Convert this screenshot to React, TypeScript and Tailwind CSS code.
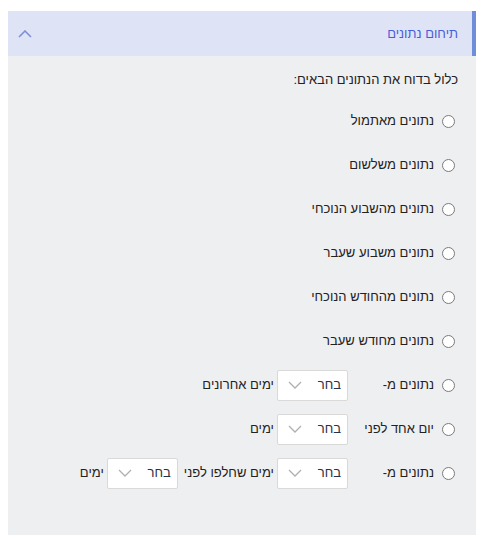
import React from "react";

function Chevron({ className }: { className?: string }) {
  return (
    <svg width="14" height="8" viewBox="0 0 14 8" className={className} fill="none">
      <path d="M1 1l6 6 6-6" stroke="currentColor" strokeWidth="1.3" />
    </svg>
  );
}

function Select() {
  return (
    <div className="w-[71px] h-[31px] bg-white border border-[#d9d9d9] rounded-[2px] flex items-center justify-between pr-[6px] pl-[10px] text-[#2a2f45]">
      <span>בחר</span>
      <Chevron className="text-[#b0b0b0]" />
    </div>
  );
}

function Radio() {
  return (
    <span className="w-[13px] h-[13px] rounded-full border border-[#7a7a7a] bg-white shrink-0 inline-block" />
  );
}

const simple = [
  "נתונים מאתמול",
  "נתונים משלשום",
  "נתונים מהשבוע הנוכחי",
  "נתונים משבוע שעבר",
  "נתונים מהחודש הנוכחי",
  "נתונים מחודש שעבר",
];

export default function App() {
  return (
    <div
      dir="rtl"
      className="bg-white pt-[11px] px-[8px] pb-[6px] text-[13px] text-[#222]"
      style={{ fontFamily: '"Liberation Sans", Arial, sans-serif' }}
    >
      <div className="w-[468px]">
        <div className="h-[45px] bg-[#dee4f6] border-r-4 border-[#6f8ddb] flex items-center justify-between pr-[14px] pl-[10px]">
          <span className="text-[#4b5dd6]">תיחום נתונים</span>
          <svg width="14" height="8" viewBox="0 0 14 8" fill="none" className="text-[#7d90d8]">
            <path d="M1 7l6-6 6 6" stroke="currentColor" strokeWidth="1.6" />
          </svg>
        </div>
        <div className="bg-[#eeeff1] h-[479px] pr-[18px] pt-[14px]">
          <div className="h-[20px] leading-[20px]">כלול בדוח את הנתונים הבאים:</div>
          <div className="pt-[9px]">
            {simple.map((t) => (
              <div key={t} className="h-[44px] flex items-center gap-[8px] pr-[3px]">
                <Radio />
                <span>{t}</span>
              </div>
            ))}
            <div className="h-[44px] flex items-center pr-[3px]">
              <Radio />
              <span className="w-[94px] pr-[8px] shrink-0">נתונים מ-</span>
              <Select />
              <span className="pr-[3px]">ימים אחרונים</span>
            </div>
            <div className="h-[44px] flex items-center pr-[3px]">
              <Radio />
              <span className="w-[94px] pr-[8px] shrink-0">יום אחד לפני</span>
              <Select />
              <span className="pr-[3px]">ימים</span>
            </div>
            <div className="h-[44px] flex items-center pr-[3px]">
              <Radio />
              <span className="w-[94px] pr-[8px] shrink-0">נתונים מ-</span>
              <Select />
              <span className="pr-[3px] pl-[6px]">ימים שחלפו לפני</span>
              <Select />
              <span className="pr-[3px]">ימים</span>
            </div>
          </div>
        </div>
      </div>
    </div>
  );
}
